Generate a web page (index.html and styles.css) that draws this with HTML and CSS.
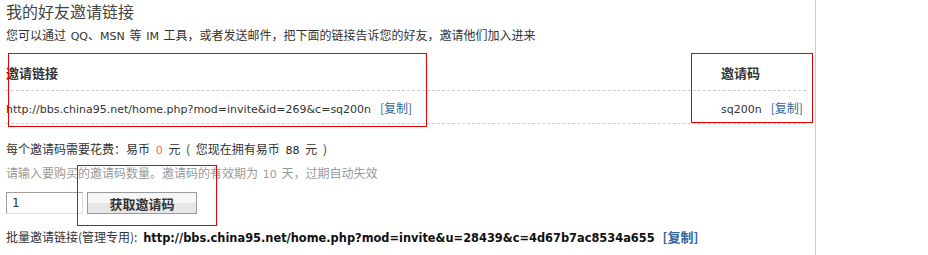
FILE: index.html
```html
<!DOCTYPE html>
<html lang="zh-CN">
<head>
<meta charset="utf-8">
<title>我的好友邀请链接</title>
<link rel="stylesheet" href="styles.css">
</head>
<body>
<div class="main">
  <h3 class="title">我的好友邀请链接</h3>
  <p class="intro">您可以通过 <span class="en">QQ</span>、<span class="en">MSN</span> 等 <span class="en">IM</span> 工具，或者发送邮件，把下面的链接告诉您的好友，邀请他们加入进来</p>

  <div class="invite">
    <div class="row head">
      <div class="col-link">邀请链接</div>
      <div class="col-code">邀请码</div>
    </div>
    <div class="row">
      <div class="col-link"><span class="en">http://bbs.china95.net/home.php?mod=invite&amp;id=269&amp;c=sq200n</span><a class="copy" href="#">[复制]</a></div>
      <div class="col-code"><span class="en">sq200n</span><a class="copy" href="#">[复制]</a></div>
    </div>
  </div>

  <p class="line">每个邀请码需要花费：易币 <span class="en red">0</span> 元 ( 您现在拥有易币 <span class="en dark">88</span> 元 )</p>
  <p class="line tip">请输入要购买的邀请码数量。邀请码的有效期为 <span class="en">10</span> 天，过期自动失效</p>

  <form class="buy" onsubmit="return false">
    <input class="num" type="text" value="1">
    <button class="btn" type="button">获取邀请码</button>
  </form>

  <p class="bulk">批量邀请链接(管理专用): <strong class="bulk-url">http://bbs.china95.net/home.php?mod=invite&amp;u=28439&amp;c=4d67b7ac8534a655</strong><a class="copy strong" href="#">[复制]</a></p>
</div>

<div class="mark mark-link"></div>
<div class="mark mark-code"></div>
<div class="mark mark-btn"></div>
</body>
</html>
```

FILE: styles.css
```css
html, body {
  margin: 0;
  padding: 0;
  background: #fff;
}

body {
  font-family: "DejaVu Sans", "Noto Sans CJK SC", sans-serif;
  font-size: 12px;
  color: #333;
  position: relative;
  height: 255px;
  overflow: hidden;
}

.main {
  width: 816px;
  height: 255px;
  box-sizing: border-box;
  border-right: 1px solid #ccc;
  padding-left: 6px;
}

.en {
  font-family: "DejaVu Sans", sans-serif;
  font-size: 11px;
}

.title {
  margin: 0;
  height: 22px;
  line-height: 22px;
  font-size: 16px;
  font-weight: normal;
  color: #444;
  font-family: "Noto Sans CJK SC", sans-serif;
}

.intro {
  margin: 3px 0 0;
  line-height: 20px;
  font-family: "Noto Sans CJK SC", sans-serif;
  word-spacing: 2px;
}

.intro .en, .line .en {
  font-family: "DejaVu Sans", sans-serif;
}

.invite {
  margin-top: 8px;
  width: 800px;
}

.row {
  display: flex;
  align-items: center;
  height: 32px;
  border-bottom: 1px dashed #ccc;
}

.row.head {
  height: 35px;
  font-weight: bold;
  font-size: 13px;
  color: #333;
  font-family: "Noto Sans CJK SC", sans-serif;
}

.col-link {
  width: 715px;
  flex: none;
}

.col-code {
  width: 85px;
  flex: none;
}

.copy {
  color: #336699;
  text-decoration: none;
  margin-left: 9px;
  font-family: "Noto Sans CJK SC", sans-serif;
}

.line {
  margin: 0;
  line-height: 22px;
  font-family: "Noto Sans CJK SC", sans-serif;
  word-spacing: 3px;
}

.line.tip {
  word-spacing: 2px;
}

.invite + .line {
  margin-top: 14px;
}

.tip {
  color: #999;
}

.red {
  color: #f26c4f;
}

.dark {
  color: #222;
}

.buy {
  margin: 6px 0 0;
  display: flex;
  gap: 4px;
}

.num {
  width: 77px;
  height: 22px;
  box-sizing: border-box;
  border: 1px solid #ddd;
  border-top-color: #a0a0a0;
  border-left-color: #a0a0a0;
  padding: 0 5px;
  font-family: "DejaVu Sans", sans-serif;
  font-size: 12px;
  color: #333;
  margin: 0;
}

.btn {
  width: 110px;
  height: 22px;
  box-sizing: border-box;
  margin: 0;
  padding: 0;
  border: 1px solid #999;
  background: linear-gradient(#f6f6f6 0, #f6f6f6 50%, #e6e6e6 50%, #e6e6e6 100%);
  font-family: "Noto Sans CJK SC", sans-serif;
  font-size: 13px;
  font-weight: bold;
  color: #333;
}

.bulk {
  margin: 13px 0 0;
  line-height: 20px;
  font-family: "Noto Sans CJK SC", sans-serif;
  word-spacing: 3px;
}

.bulk-url {
  font-family: "DejaVu Sans", sans-serif;
  font-size: 11.4px;
  font-weight: bold;
  color: #111;
}

.copy.strong {
  font-weight: bold;
  margin-left: 8px;
  font-size: 13px;
}

.mark {
  position: absolute;
  border: 1px solid #e00;
  box-sizing: border-box;
}

.mark-link {
  left: 8px;
  top: 53px;
  width: 419px;
  height: 74px;
}

.mark-code {
  left: 691px;
  top: 53px;
  width: 122px;
  height: 70px;
}

.mark-btn {
  left: 77px;
  top: 165px;
  width: 140px;
  height: 61px;
}
```
